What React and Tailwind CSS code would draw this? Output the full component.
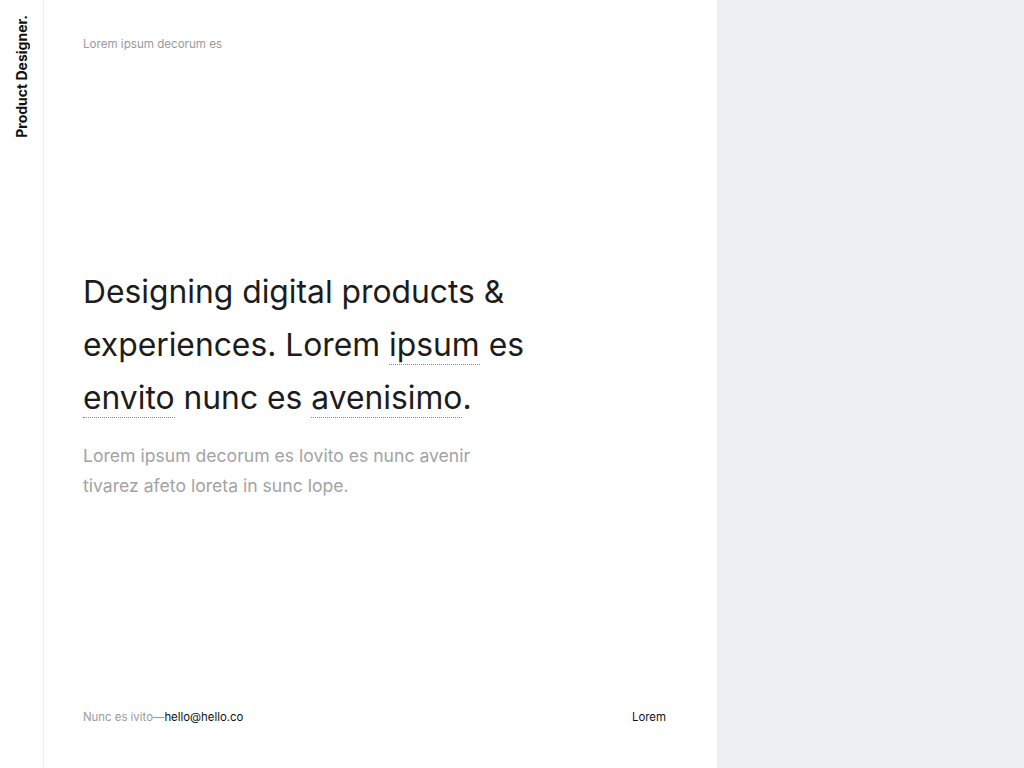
export default function App() {
  const dot = "border-b border-dotted border-[#8a8a8a]";
  return (
    <div className="flex h-screen w-full bg-white text-[#1a1a1a]" style={{ fontFamily: "Inter, 'Liberation Sans', sans-serif" }}>
      <aside className="w-[44px] shrink-0 border-r border-[#ededed] flex justify-center pt-[15px]">
        <div className="[writing-mode:vertical-rl] rotate-180 text-[14px] font-bold leading-[16px] text-[#111] h-fit">
          Product Designer.
        </div>
      </aside>
      <main className="w-[673px] shrink-0 flex flex-col pl-[39px] pr-[51px] pt-[36px] pb-[43px]">
        <p className="text-[11.6px] leading-[16px] text-[#9a9a9a]">Lorem ipsum decorum es</p>
        <h1 className="mt-[213px] text-[31.8px] leading-[53px] font-normal text-[#1c1c1c] max-w-[460px]">
          Designing digital products &amp; experiences. Lorem <span className={dot}>ipsum</span> es{" "}
          <span className={dot}>envito</span> nunc es <span className={dot}>avenisimo</span>.
        </h1>
        <p className="mt-[17px] text-[17.6px] leading-[30px] text-[#a3a3a3] max-w-[400px]">
          Lorem ipsum decorum es lovito es nunc avenir tivarez afeto loreta in sunc lope.
        </p>
        <div className="mt-auto flex items-center justify-between text-[11.4px] leading-[16px]">
          <p>
            <span className="text-[#9a9a9a]">Nunc es ivito—</span>
            <span className="text-[#111]">hello@hello.co</span>
          </p>
          <span className="text-[#111]">Lorem</span>
        </div>
      </main>
      <section className="flex-1 bg-[#edf0f3]" />
    </div>
  );
}
